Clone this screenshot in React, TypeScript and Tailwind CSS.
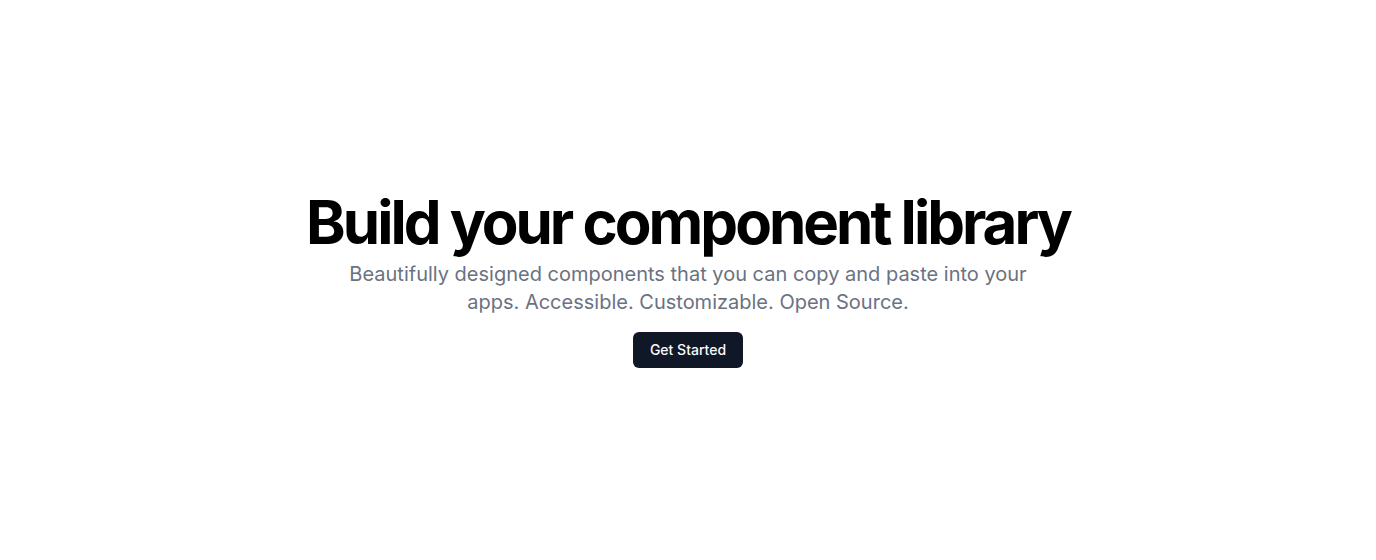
export default function App() {
  return (
    <div
      className="flex min-h-[560px] w-full flex-col items-center justify-center bg-white text-center"
      style={{ fontFamily: "Inter, 'Noto Sans', sans-serif" }}
    >
      <div className="flex flex-col items-center gap-2">
        <h1 className="text-6xl leading-none font-bold tracking-tighter text-black">
          Build your component library
        </h1>
        <p className="max-w-[700px] text-xl leading-7 text-gray-500">
          Beautifully designed components that you can copy and paste into your apps. Accessible. Customizable. Open
          Source.
        </p>
      </div>
      <button className="mt-4 inline-flex h-9 items-center justify-center rounded-md bg-gray-900 px-[17px] text-sm font-medium text-gray-50">
        Get Started
      </button>
    </div>
  );
}
